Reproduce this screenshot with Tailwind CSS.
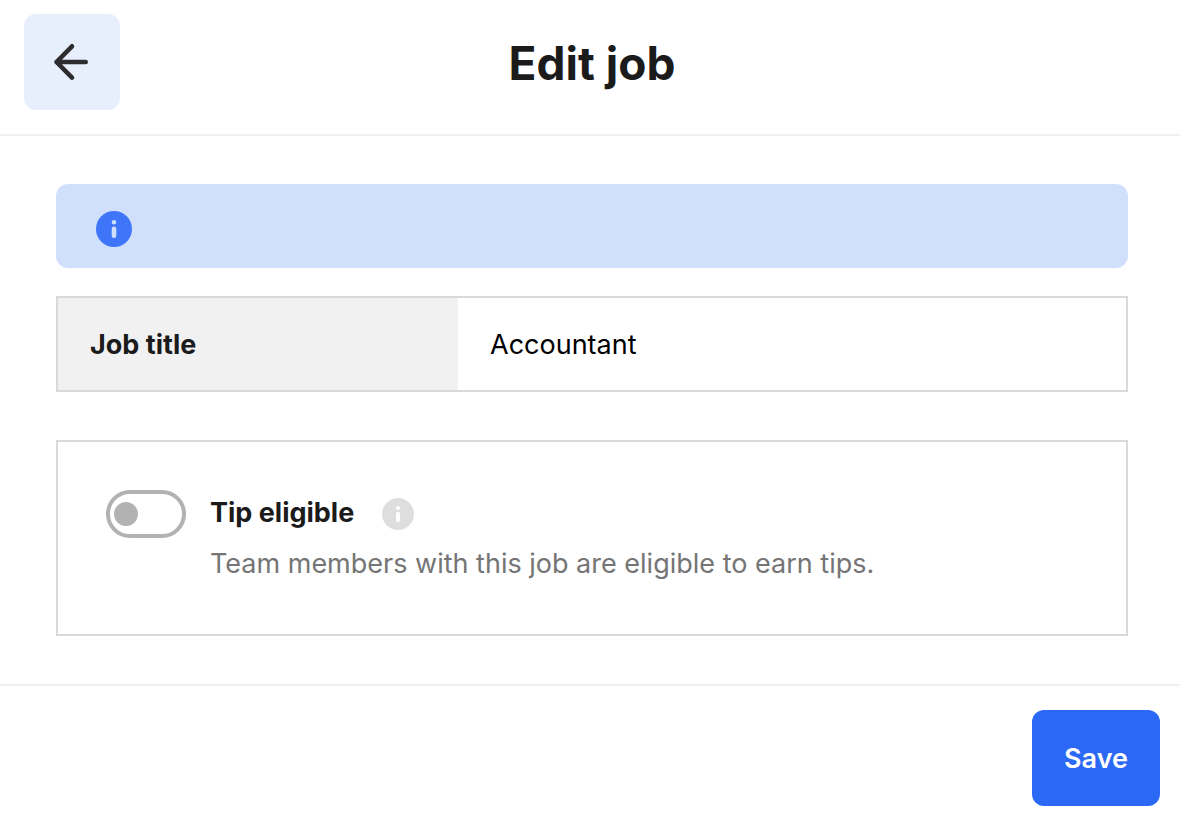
<!DOCTYPE html>
<html lang="en">
<head>
<meta charset="utf-8">
<meta name="viewport" content="width=device-width, initial-scale=1">
<title>Edit job</title>
<script src="https://cdn.jsdelivr.net/npm/@tailwindcss/browser@4"></script>
</head>
<body class="bg-white font-['Inter',sans-serif] text-[#1b1b1b]">
<form class="flex min-h-screen flex-col">
  <header class="grid grid-cols-[96px_1fr_96px] items-center border-b-2 border-[#f0f0f0] pt-3.5 pr-5 pb-6 pl-6">
    <button type="button" aria-label="Back" class="flex size-24 items-center justify-center rounded-xl bg-[#e7effd]">
      <svg class="size-12" viewBox="0 0 48 48" fill="none" stroke="#2d2d2f" stroke-width="4.6" stroke-linecap="round" stroke-linejoin="round" aria-hidden="true"><path d="M37.7 24H8.5M24 8.3L8.5 24L24 39.7"/></svg>
    </button>
    <h1 class="pt-0.5 text-center text-[46px] leading-14 font-bold">Edit job</h1>
  </header>

  <main class="flex flex-col pt-12 pr-13 pb-12 pl-14">
    <div role="status" class="flex h-21 items-center rounded-xl bg-[#d0dffc] px-10 pt-1.5">
      <svg class="size-9" viewBox="0 0 36 36" aria-hidden="true"><circle cx="18" cy="18" r="18" fill="#3f76f9"/><circle cx="18" cy="11.2" r="2.2" fill="#d0dffc"/><rect x="15.7" y="15.6" width="4.6" height="11.4" rx="2.3" fill="#d0dffc"/></svg>
    </div>

    <div class="mt-7 flex h-24 border-2 border-[#d9d9d9]">
      <label for="job-title" class="flex w-100 shrink-0 items-center bg-[#f1f1f1] px-8 pt-0.5 text-[27px] font-bold">Job title</label>
      <input id="job-title" type="text" value="Accountant" class="min-w-0 flex-1 bg-white px-8 pt-0.5 text-[27px] text-black outline-none">
    </div>

    <section class="mt-12 flex gap-6 border-2 border-[#d9d9d9] p-12">
      <input id="tips" type="checkbox" role="switch" aria-describedby="tips-note" class="flex h-12 w-20 shrink-0 appearance-none items-center rounded-full border-4 border-[#b2b2b2] px-1 before:size-6 before:rounded-full before:bg-[#b2b2b2] checked:justify-end">
      <div>
        <div class="flex h-12 items-center gap-7">
          <label for="tips" class="pb-0.5 text-[27px] leading-10 font-bold">Tip eligible</label>
          <button type="button" aria-label="About tip eligibility">
            <svg class="size-8" viewBox="0 0 36 36" aria-hidden="true"><circle cx="18" cy="18" r="18" fill="#dedede"/><circle cx="18" cy="11.2" r="2.3" fill="#fff"/><rect x="15.7" y="15.6" width="4.6" height="11.4" rx="2.3" fill="#fff"/></svg>
          </button>
        </div>
        <p id="tips-note" class="pt-1.5 pb-0.5 text-[27px] leading-10 text-[#757575]">Team members with this job are eligible to earn tips.</p>
      </div>
    </section>
  </main>

  <footer class="flex flex-1 items-start justify-end border-t-2 border-[#f0f0f0] pt-6 pr-5 pb-3.5">
    <button type="submit" class="h-24 w-32 rounded-xl bg-[#2b68f6] pt-0.5 text-[27px] font-semibold text-white">Save</button>
  </footer>
</form>
</body>
</html>
